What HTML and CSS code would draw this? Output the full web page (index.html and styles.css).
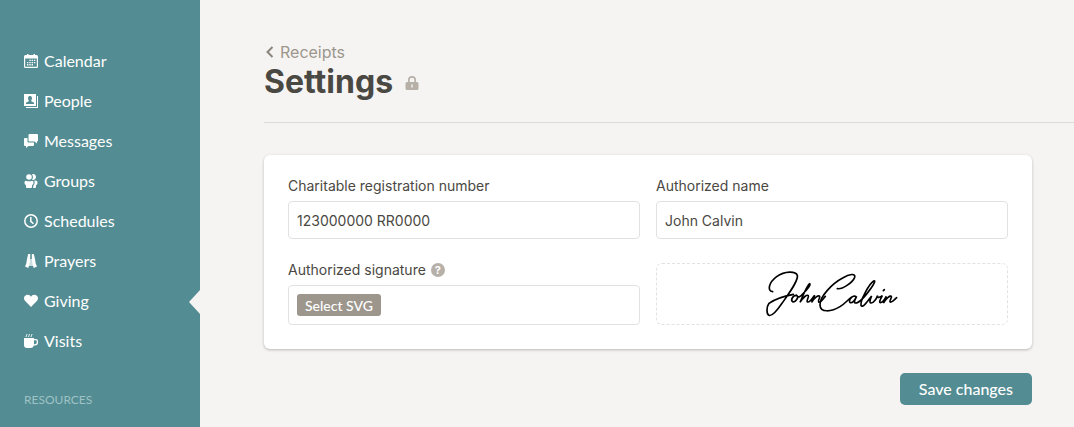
FILE: index.html
```html
<!DOCTYPE html>
<html lang="en">
<head>
  <meta charset="UTF-8" />
  <meta name="viewport" content="width=device-width, initial-scale=1" />
  <title>Receipts - Settings</title>
  <link rel="stylesheet" href="styles.css">
</head>
<body>
  <nav class="sidebar">
    <ul class="menu">
      <li><a href="#">
        <svg class="icon" viewBox="0 0 14 14"><path fill-rule="evenodd" d="M3 0h1.500v1h5V0H11v1h1.500A1.500 1.500 0 0 1 14 2.500v10a1.500 1.500 0 0 1-1.500 1.500h-11A1.500 1.500 0 0 1 0 12.500v-10A1.500 1.500 0 0 1 1.500 1H3zM1.200 4.500v8.300h11.600V4.500z"/><path d="M5.300 5.700h1.400V7H5.300zM7.600 5.700H9V7H7.600zM9.900 5.700h1.400V7H9.900zM3 7.900h1.400v1.300H3zM5.300 7.900h1.400v1.300H5.300zM7.600 7.900H9v1.300H7.600zM9.900 7.900h1.400v1.300H9.900zM3 10.100h1.400v1.300H3zM5.300 10.100h1.400v1.300H5.300zM7.600 10.100H9v1.300H7.600z"/></svg>
        Calendar</a></li>
      <li><a href="#">
        <svg class="icon" viewBox="0 0 14 14"><path fill-rule="evenodd" d="M0 0h12v12H0zM2 10h8V8.700L7.300 7.300V6.200C8.500 4.800 8.200 2 6 2S3.500 4.800 4.700 6.200v1.100L2 8.700z"/><path d="M13 2h1v12H2v-1h11z"/></svg>
        People</a></li>
      <li><a href="#">
        <svg class="icon" viewBox="0 0 14 14"><path d="M5.500 0H13a1 1 0 0 1 1 1v5.500a1 1 0 0 1-1 1v2l-2.500-2h-5a1 1 0 0 1-1-1V1a1 1 0 0 1 1-1z"/><path d="M1 4h2.500v3.500a1 1 0 0 0 1 1H10V11a1 1 0 0 1-1 1H4.500L2 14v-2H1a1 1 0 0 1-1-1V5a1 1 0 0 1 1-1z"/></svg>
        Messages</a></li>
      <li><a href="#">
        <svg class="icon" viewBox="0 0 14 14"><circle cx="5" cy="3" r="2.800"/><path d="M.5 8.500C.5 7.300 1.200 6.700 2 6.700c1 .8 5 .8 6 0 1 0 1.500.7 1.500 1.800 0 1.500-.6 2.300-1.500 2.700V13a1 1 0 0 1-1 1H3a1 1 0 0 1-1-1v-1.800C1 10.700.5 10 .5 8.500z"/><path d="M8 .3c2-.8 4 .7 4 2.700S10 6.500 8 5.700C9.200 4.500 9.200 1.500 8 .3zM11.300 6.500c1.500 0 2.200.8 2.200 2 0 1.500-.5 2.300-1.500 2.700V13a1 1 0 0 1-1 1H9.200v-2c1.500-1.500 1.800-3.700 1-5.200z"/></svg>
        Groups</a></li>
      <li><a href="#">
        <svg class="icon icon-line" viewBox="0 0 14 14"><circle cx="7" cy="7" r="6.200"/><path d="M6.800 3v4.300l2.700 2.500"/></svg>
        Schedules</a></li>
      <li><a href="#">
        <svg class="icon" viewBox="0 0 14 14"><path d="M4.200 0h2v5.500L5.300 11l-1 3L1 12.500l1.300-3L3 5zM9.800 0h-2v5.500L8.700 11l1 3 3.300-1.500-1.300-3L11 5z"/><path opacity=".7" d="M5 5h4l1 7H4z"/></svg>
        Prayers</a></li>
      <li class="active"><a href="#">
        <svg class="icon" viewBox="0 0 14 14"><path d="M7 13 .9 6.700C-1.500 3.500 1.300.6 3.700.8 5.300.9 6.300 1.700 7 2.700 7.700 1.700 8.700.9 10.300.8c2.400-.2 5.200 2.700 2.800 5.900z"/></svg>
        Giving</a></li>
      <li><a href="#">
        <svg class="icon" viewBox="0 0 14 14"><path fill-rule="evenodd" d="M0 4h10v1h2a2 2 0 0 1 2 2v1.500a3 3 0 0 1-3 3h-1.200A3 3 0 0 1 7 14H3a3 3 0 0 1-3-3zM10 6.200v4h1a1.700 1.700 0 0 0 1.700-1.700V7a.8.8 0 0 0-.8-.8z"/><path class="steam" d="M2.500 0q1 .8 0 1.500t0 1.500M5 0q1 .8 0 1.500t0 1.500M7.500 0q1 .8 0 1.500t0 1.500"/></svg>
        Visits</a></li>
    </ul>
    <h2 class="menu-title">RESOURCES</h2>
  </nav>

  <main class="main">
    <header class="page-header">
      <a class="back" href="#">
        <svg class="chevron" viewBox="0 0 8 12"><path d="M6.500 1 1.500 6l5 5"/></svg>
        Receipts</a>
      <div class="title-row">
        <h1>Settings</h1>
        <svg class="lock" viewBox="0 0 14 16"><path fill-rule="evenodd" d="M3 7V5a4 4 0 0 1 8 0v2h1a1.500 1.500 0 0 1 1.500 1.500v5A1.500 1.500 0 0 1 12 15H2a1.500 1.500 0 0 1-1.500-1.500v-5A1.500 1.500 0 0 1 2 7zM4.700 7h4.600V5a2.300 2.300 0 0 0-4.600 0zM6.300 9.500v3h1.400v-3z"/></svg>
      </div>
    </header>

    <form class="settings">
      <div class="card">
        <div class="field">
          <label for="regNumber">Charitable registration number</label>
          <input type="text" id="regNumber" value="123000000 RR0000">
        </div>
        <div class="field">
          <label for="authName">Authorized name</label>
          <input type="text" id="authName" value="John Calvin">
        </div>
        <div class="field">
          <div class="label-row">
            <label for="selectSvg">Authorized signature</label>
            <span class="help">?</span>
          </div>
          <div class="file-box">
            <button type="button" class="btn-file" id="selectSvg">Select SVG</button>
          </div>
        </div>
        <div class="preview">
          <!-- Signature preview -->
          <svg class="signature" viewBox="45 45 402 144" role="img" aria-label="Signature">
            <path d="M68 110C50 108 57 82 80 65C105 47 137 48 142 61C146 76 119 112 96 145C79 170 64 184 57 181C48 176 50 155 57 145C72 134 104 123 130 118"/>
            <path d="M139 121C128 121 121 136 128 140C137 143 147 126 141 122C143 130 153 124 158 117C171 104 184 88 179 86C174 85 158 124 150 142C160 126 171 118 175 122C178 126 167 138 173 141C180 143 187 129 194 121C192 130 186 138 185 142C194 128 205 119 209 124C211 129 202 138 206 141C212 144 220 130 226 124"/>
            <path d="M262 101C276 104 308 83 314 67C318 54 298 57 278 69C246 86 210 124 210 149C210 175 246 170 270 155C286 145 294 134 304 127"/>
            <path d="M318 125C309 117 292 138 301 143C309 145 317 130 320 124C316 132 310 143 316 144C327 145 350 118 364 98C374 84 377 75 371 78C357 87 330 137 333 151C338 162 356 134 365 123C361 132 357 143 363 144C370 145 380 130 383 122C381 130 388 128 397 122C392 131 386 143 391 143C396 143 405 131 409 124C406 132 401 139 400 144C409 130 421 120 424 124C427 128 416 138 421 141C425 143 434 134 440 128M400 107l3-3"/>
          </svg>
        </div>
      </div>
      <div class="actions">
        <button type="submit" class="btn">Save changes</button>
      </div>
    </form>
  </main>
</body>
</html>
```
FILE: styles.css
```css
* {
  box-sizing: border-box;
}
body {
  margin: 0;
  display: flex;
  min-height: 100vh;
  background-color: #f6f4f2;
  color: #4a4842;
  font-family: Inter, "Liberation Sans", sans-serif;
  font-size: 14px;
}
.sidebar {
  width: 200px;
  flex-shrink: 0;
  padding-top: 40px;
  background-color: #538c92;
  font-family: Lato, sans-serif;
}
.menu {
  list-style: none;
  margin: 0;
  padding: 0;
}
.menu li {
  position: relative;
}
.menu a {
  display: flex;
  align-items: center;
  gap: 6px;
  height: 40px;
  padding: 0 24px;
  color: white;
  font-size: 16px;
  text-decoration: none;
}
.menu .active::after {
  content: "";
  position: absolute;
  top: 10px;
  right: 0;
  border: solid transparent;
  border-width: 12px 11px 12px 0;
  border-right-color: #f6f4f2;
}
.icon {
  width: 14px;
  height: 14px;
  margin-top: 2px;
  fill: white;
}
.icon-line {
  fill: none;
  stroke: white;
  stroke-width: 1.500;
}
.steam {
  fill: none;
  stroke: white;
}
.menu-title {
  margin: 32px 24px 0;
  color: #9ec2c5;
  font-size: 12px;
  font-weight: normal;
  line-height: 16px;
}
.main {
  flex: 1;
  min-width: 0;
  padding: 42px 0 22px 64px;
}
.page-header {
  padding-bottom: 20px;
  margin-bottom: 32px;
  border-bottom: 1px solid #dcd9d6;
}
.back {
  display: flex;
  align-items: center;
  gap: 6px;
  padding-left: 2px;
  color: #9c968d;
  font-size: 16px;
  line-height: 20px;
  text-decoration: none;
}
.chevron {
  width: 8px;
  height: 12px;
  fill: none;
  stroke: #8b867d;
  stroke-width: 2;
}
.title-row {
  display: flex;
  align-items: center;
  gap: 12px;
}
h1 {
  margin: 0;
  font-size: 32px;
  font-weight: 700;
  line-height: 40px;
}
.lock {
  width: 14px;
  height: 16px;
  margin-top: 2px;
  fill: #b7b0a9;
}
.settings {
  max-width: 768px;
  margin-right: 42px;
}
.card {
  display: grid;
  grid-template-columns: 1fr 1fr;
  gap: 24px 16px;
  padding: 24px;
  background-color: white;
  border-radius: 6px;
  box-shadow: 0 1px 3px rgba(0,0,0,0.25);
}
.field {
  display: flex;
  flex-direction: column;
  gap: 8px;
  line-height: 14px;
}
.label-row {
  display: flex;
  align-items: center;
  gap: 5px;
}
.help {
  width: 14px;
  height: 14px;
  border-radius: 50%;
  background-color: #b7b0a9;
  color: white;
  font-size: 11px;
  font-weight: 700;
  text-align: center;
}
.field input {
  width: 100%;
  height: 38px;
  padding: 0 8px;
  border: 1px solid #e2e2e2;
  border-radius: 4px;
  color: #4a4842;
  font: inherit;
}
.file-box {
  display: flex;
  align-items: center;
  height: 40px;
  padding: 0 8px;
  border: 1px solid #e2e2e2;
  border-radius: 4px;
}
.btn-file {
  height: 22px;
  padding: 0 8px;
  border: none;
  border-radius: 3px;
  background-color: #9c968d;
  color: white;
  font-family: Lato, sans-serif;
  font-size: 14px;
  font-weight: 500;
  cursor: pointer;
}
.preview {
  display: flex;
  align-items: center;
  justify-content: center;
  border: 1px dashed #e2e2e2;
  border-radius: 6px;
}
.signature {
  width: 134px;
  height: 48px;
  fill: none;
  stroke: black;
  stroke-width: 5;
  stroke-linecap: round;
}
.actions {
  display: flex;
  justify-content: flex-end;
  margin-top: 24px;
}
.btn {
  height: 32px;
  padding: 0 19px 2px;
  border: none;
  border-radius: 5px;
  background-color: #538c92;
  color: white;
  font-family: Lato, sans-serif;
  font-size: 16px;
  font-weight: 500;
  cursor: pointer;
}
.btn:hover {
  background-color: #457a80;
}
```
